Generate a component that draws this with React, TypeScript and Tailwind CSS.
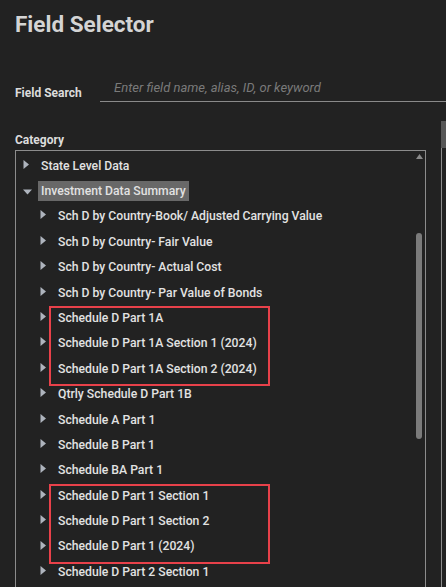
import React from 'react';

type Row = { label: string; level: 1 | 2; open?: boolean; selected?: boolean };

const groupA = ['Schedule D Part 1A', 'Schedule D Part 1A Section 1 (2024)', 'Schedule D Part 1A Section 2 (2024)'];
const groupB = ['Schedule D Part 1 Section 1', 'Schedule D Part 1 Section 2', 'Schedule D Part 1 (2024)'];

function Caret({ open }: { open?: boolean }) {
  if (open) {
    return (
      <svg width="9" height="6" viewBox="0 0 9 6" className="shrink-0">
        <path d="M0 0.5 L9 0.5 L4.5 5.5 Z" fill="#aeb4bd" />
      </svg>
    );
  }
  return (
    <svg width="6" height="9" viewBox="0 0 6 9" className="shrink-0">
      <path d="M0.5 0 L6 4.5 L0.5 9 Z" fill="#aeb4bd" />
    </svg>
  );
}

function TreeRow({ label, level, open, selected }: Row) {
  return (
    <div className={`flex h-[25.4px] items-center ${level === 1 ? 'pl-[7px]' : 'pl-[24px]'}`}>
      <div className={`flex w-[18px] items-center ${open ? 'pt-[1px]' : 'pb-[3px]'}`}>
        <Caret open={open} />
      </div>
      <span
        className={`whitespace-nowrap text-[12.2px] font-medium leading-none text-[#e2e2e2] ${
          selected ? '-ml-[3px] bg-[#686868] px-[3px] py-[4px]' : ''
        }`}
      >
        {label}
      </span>
    </div>
  );
}

function Marked({ items }: { items: string[] }) {
  return (
    <div className="relative">
      {items.map((t) => (
        <TreeRow key={t} label={t} level={2} />
      ))}
      {/* annotation box drawn over the rows */}
      <div className="pointer-events-none absolute left-[33px] top-[1px] h-[80px] w-[221px] border-2 border-[#e8414a]" />
    </div>
  );
}

export default function App() {
  return (
    <div
      className="relative h-[587px] w-[446px] overflow-hidden bg-[#222222] text-[#e2e2e2]"
      style={{ fontFamily: 'Roboto, "Liberation Sans", sans-serif' }}
    >
      <h1 className="pl-[15px] pt-[10px] text-[22.5px] font-bold leading-[28px] text-[#d4d4d4]">Field Selector</h1>

      <div className="mt-[36px] flex items-end">
        <div className="w-[100px] pb-[1px] pl-[15px] text-[12px] font-bold leading-[16px] text-[#dcdcdc]">Field Search</div>
        <div className="flex h-[28px] flex-1 items-center border-b border-[#8a8a8a] pl-[14px]">
          <input
            className="w-full bg-transparent text-[13px] italic text-[#cfcfcf] outline-none placeholder:text-[#7a7a7a]"
            placeholder="Enter field name, alias, ID, or keyword"
          />
        </div>
      </div>

      <div className="mt-[19px] flex">
        <div className="w-[426px] pl-[15px] pt-[10px]">
          <div className="text-[12px] font-bold leading-[18px] text-[#dcdcdc]">Category</div>
          <div className="mt-[1px] flex h-[460px] border-l border-r border-t border-[#8c8c8c]">
            <div className="flex-1 pt-[2px]">
              <TreeRow label="State Level Data" level={1} />
              <TreeRow label="Investment Data Summary" level={1} open selected />
              <TreeRow label="Sch D by Country-Book/ Adjusted Carrying Value" level={2} />
              <TreeRow label="Sch D by Country- Fair Value" level={2} />
              <TreeRow label="Sch D by Country- Actual Cost" level={2} />
              <TreeRow label="Sch D by Country- Par Value of Bonds" level={2} />
              <Marked items={groupA} />
              <TreeRow label="Qtrly Schedule D Part 1B" level={2} />
              <TreeRow label="Schedule A Part 1" level={2} />
              <TreeRow label="Schedule B Part 1" level={2} />
              <TreeRow label="Schedule BA Part 1" level={2} />
              <Marked items={groupB} />
              <TreeRow label="Schedule D Part 2 Section 1" level={2} />
            </div>
            <div className="flex w-[10px] flex-col items-center pr-[2px] pt-[3px]">
              <svg width="7" height="5" viewBox="0 0 7 5">
                <path d="M3.5 0 L7 5 L0 5 Z" fill="#8a8a8a" />
              </svg>
              <div className="mt-[74px] h-[206px] w-[6px] rounded-[3px] bg-[#7b7b7b]" />
            </div>
          </div>
        </div>
        <div className="ml-[15px] flex-1">
          <div className="h-[27px] bg-[#575757]" />
          <div className="h-[460px] border-l border-[#8c8c8c]" />
        </div>
      </div>
    </div>
  );
}
